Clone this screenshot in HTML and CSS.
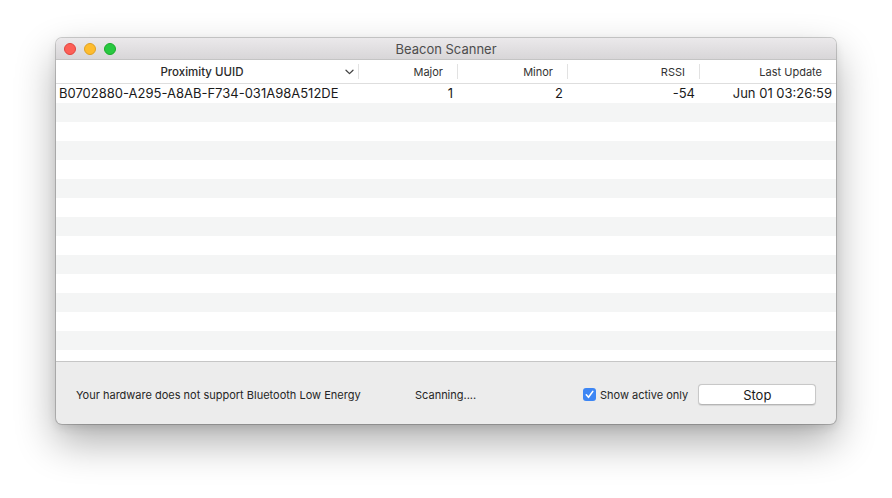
FILE: index.html
```html
<!DOCTYPE html>
<html>
<head>
<meta charset="utf-8">
<link rel="stylesheet" href="styles.css">
</head>
<body>
<div class="window">
  <div class="titlebar">
    <div class="lights">
      <span class="light red"></span>
      <span class="light yellow"></span>
      <span class="light green"></span>
    </div>
    <div class="title">Beacon Scanner</div>
  </div>
  <div class="thead">
    <div class="th th-uuid"><span class="th-label">Proximity UUID</span>
      <svg class="chev" width="9" height="6" viewBox="0 0 9 6"><path d="M1 1.2 L4.5 4.6 L8 1.2" fill="none" stroke="#444" stroke-width="1.3" stroke-linecap="round" stroke-linejoin="round"/></svg>
    </div>
    <div class="th">Major</div>
    <div class="th">Minor</div>
    <div class="th">RSSI</div>
    <div class="th th-last">Last Update</div>
  </div>
  <div class="tbody">
    <div class="row">
      <div class="td td-uuid">B0702880-A295-A8AB-F734-031A98A512DE</div>
      <div class="td">1</div>
      <div class="td">2</div>
      <div class="td">-54</div>
      <div class="td">Jun 01 03:26:59</div>
    </div>
    <div class="row"></div>
    <div class="row"></div>
    <div class="row"></div>
    <div class="row"></div>
    <div class="row"></div>
    <div class="row"></div>
    <div class="row"></div>
    <div class="row"></div>
    <div class="row"></div>
    <div class="row"></div>
    <div class="row"></div>
    <div class="row"></div>
    <div class="row"></div>
    <div class="row"></div>
  </div>
  <div class="footer">
    <div class="status">Your hardware does not support Bluetooth Low Energy</div>
    <div class="scanning">Scanning....</div>
    <label class="check">
      <span class="box"><svg width="13" height="13" viewBox="0 0 13 13"><path d="M3.3 6.8 L5.5 9.3 L9.8 3.4" fill="none" stroke="#fff" stroke-width="1.6" stroke-linecap="round" stroke-linejoin="round"/></svg></span>
      <span class="check-label">Show active only</span>
    </label>
    <button class="btn">Stop</button>
  </div>
</div>
</body>
</html>
```
FILE: styles.css
```css
* { box-sizing: border-box; }
html, body { margin: 0; padding: 0; background: #ffffff; }
body {
  width: 892px;
  height: 498px;
  overflow: hidden;
  font-family: "Inter", "Liberation Sans", sans-serif;
  color: #262626;
  padding-top: 38px;
  padding-left: 56px;
}
.window {
  width: 780px;
  height: 386px;
  border-radius: 6px;
  overflow: hidden;
  background: #ececec;
  box-shadow: 0 0 0 1px rgba(0,0,0,0.18), 0 18px 40px rgba(0,0,0,0.32), 0 4px 10px rgba(0,0,0,0.1);
  display: flex;
  flex-direction: column;
}
.titlebar {
  height: 22px;
  flex: none;
  background: linear-gradient(#ebe9eb, #d8d6d8);
  border-bottom: 1px solid #c4c4c4;
  display: flex;
  align-items: center;
  position: relative;
}
.lights { display: flex; gap: 8px; padding-left: 8px; }
.light { width: 12px; height: 12px; border-radius: 50%; display: block; }
.red { background: #fd5f57; border: 0.5px solid #e0443e; }
.yellow { background: #febc2e; border: 0.5px solid #dea123; }
.green { background: #28c840; border: 0.5px solid #1aab29; }
.title {
  position: absolute;
  left: 0; right: 0; top: 0; bottom: 0;
  display: flex; align-items: center; justify-content: center;
  font-size: 13px;
  color: #4d4d4d;
}
.thead {
  height: 24px;
  flex: none;
  background: #fff;
  border-bottom: 1px solid #dedede;
  display: grid;
  grid-template-columns: 302px 99px 110px 132px 137px;
  font-size: 11px;
  color: #333;
}
.th {
  display: flex;
  align-items: center;
  justify-content: flex-end;
  padding-right: 14px;
  position: relative;
}
.th::before {
  content: "";
  position: absolute;
  left: 0; top: 4px; bottom: 4px;
  width: 1px;
  background: #e2e2e2;
}
.th-uuid::before { display: none; }
.th-uuid { justify-content: center; padding-right: 0; }
.th-label { margin-right: 10px; font-size: 11.5px; font-weight: 500; color: #2a2a2a; }
.chev { position: absolute; right: 4px; top: 9px; }
.tbody {
  height: 278px;
  flex: none;
  overflow: hidden;
  background: #fff;
  border-bottom: 1px solid #c6c6c6;
}
.row {
  height: 19px;
  display: grid;
  grid-template-columns: 302px 99px 110px 132px 137px;
  font-size: 13px;
  color: #1a1a1a;
}
.row:nth-child(even) { background: #f4f5f5; }
.td { text-align: right; padding-right: 4px; line-height: 19px; white-space: nowrap; }
.td-uuid { text-align: left; padding-left: 3px; }
.footer {
  flex: 1;
  display: flex;
  align-items: center;
  font-size: 11px;
  color: #262626;
  padding-top: 3px;
}
.status { margin-left: 20px; width: 339px; }
.scanning { width: 168px; }
.check { display: flex; align-items: center; gap: 4px; }
.box {
  width: 13px; height: 13px;
  border-radius: 3px;
  background: #3d86f4;
  display: block;
}
.box svg { display: block; }
.btn {
  margin-left: 10px;
  width: 118px;
  height: 21px;
  border: 1px solid #c8c8c8;
  border-bottom-color: #b5b5b5;
  border-radius: 4px;
  background: #fff;
  font-family: "Inter", "Liberation Sans", sans-serif;
  font-size: 13px;
  color: #1a1a1a;
  padding: 0;
  box-shadow: 0 0.5px 1px rgba(0,0,0,0.1);
}
```
